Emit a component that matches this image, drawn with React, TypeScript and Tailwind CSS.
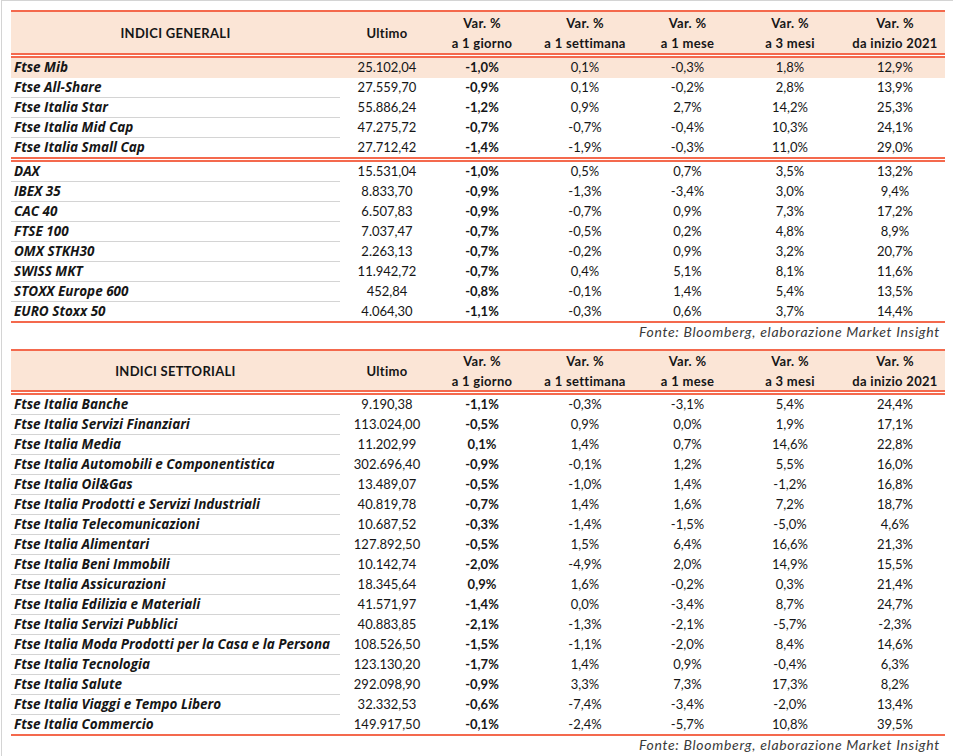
type Row = [string, string, string, string, string, string, string];

const ORANGE = "bg-[#f4694d]";

const GENERALI_IT: Row[] = [
  ["Ftse Mib", "25.102,04", "-1,0%", "0,1%", "-0,3%", "1,8%", "12,9%"],
  ["Ftse All-Share", "27.559,70", "-0,9%", "0,1%", "-0,2%", "2,8%", "13,9%"],
  ["Ftse Italia Star", "55.886,24", "-1,2%", "0,9%", "2,7%", "14,2%", "25,3%"],
  ["Ftse Italia Mid Cap", "47.275,72", "-0,7%", "-0,7%", "-0,4%", "10,3%", "24,1%"],
  ["Ftse Italia Small Cap", "27.712,42", "-1,4%", "-1,9%", "-0,3%", "11,0%", "29,0%"],
];

const GENERALI_EU: Row[] = [
  ["DAX", "15.531,04", "-1,0%", "0,5%", "0,7%", "3,5%", "13,2%"],
  ["IBEX 35", "8.833,70", "-0,9%", "-1,3%", "-3,4%", "3,0%", "9,4%"],
  ["CAC 40", "6.507,83", "-0,9%", "-0,7%", "0,9%", "7,3%", "17,2%"],
  ["FTSE 100", "7.037,47", "-0,7%", "-0,5%", "0,2%", "4,8%", "8,9%"],
  ["OMX STKH30", "2.263,13", "-0,7%", "-0,2%", "0,9%", "3,2%", "20,7%"],
  ["SWISS MKT", "11.942,72", "-0,7%", "0,4%", "5,1%", "8,1%", "11,6%"],
  ["STOXX Europe 600", "452,84", "-0,8%", "-0,1%", "1,4%", "5,4%", "13,5%"],
  ["EURO Stoxx 50", "4.064,30", "-1,1%", "-0,3%", "0,6%", "3,7%", "14,4%"],
];

const SETTORIALI: Row[] = [
  ["Ftse Italia Banche", "9.190,38", "-1,1%", "-0,3%", "-3,1%", "5,4%", "24,4%"],
  ["Ftse Italia Servizi Finanziari", "113.024,00", "-0,5%", "0,9%", "0,0%", "1,9%", "17,1%"],
  ["Ftse Italia Media", "11.202,99", "0,1%", "1,4%", "0,7%", "14,6%", "22,8%"],
  ["Ftse Italia Automobili e Componentistica", "302.696,40", "-0,9%", "-0,1%", "1,2%", "5,5%", "16,0%"],
  ["Ftse Italia Oil&Gas", "13.489,07", "-0,5%", "-1,0%", "1,4%", "-1,2%", "16,8%"],
  ["Ftse Italia Prodotti e Servizi Industriali", "40.819,78", "-0,7%", "1,4%", "1,6%", "7,2%", "18,7%"],
  ["Ftse Italia Telecomunicazioni", "10.687,52", "-0,3%", "-1,4%", "-1,5%", "-5,0%", "4,6%"],
  ["Ftse Italia Alimentari", "127.892,50", "-0,5%", "1,5%", "6,4%", "16,6%", "21,3%"],
  ["Ftse Italia Beni Immobili", "10.142,74", "-2,0%", "-4,9%", "2,0%", "14,9%", "15,5%"],
  ["Ftse Italia Assicurazioni", "18.345,64", "0,9%", "1,6%", "-0,2%", "0,3%", "21,4%"],
  ["Ftse Italia Edilizia e Materiali", "41.571,97", "-1,4%", "0,0%", "-3,4%", "8,7%", "24,7%"],
  ["Ftse Italia Servizi Pubblici", "40.883,85", "-2,1%", "-1,3%", "-2,1%", "-5,7%", "-2,3%"],
  ["Ftse Italia Moda Prodotti per la Casa e la Persona", "108.526,50", "-1,5%", "-1,1%", "-2,0%", "8,4%", "14,6%"],
  ["Ftse Italia Tecnologia", "123.130,20", "-1,7%", "1,4%", "0,9%", "-0,4%", "6,3%"],
  ["Ftse Italia Salute", "292.098,90", "-0,9%", "3,3%", "7,3%", "17,3%", "8,2%"],
  ["Ftse Italia Viaggi e Tempo Libero", "32.332,53", "-0,6%", "-7,4%", "-3,4%", "-2,0%", "13,4%"],
  ["Ftse Italia Commercio", "149.917,50", "-0,1%", "-2,4%", "-5,7%", "10,8%", "39,5%"],
];

// larghezze colonne (totale 934px)
const GRID = "grid grid-cols-[329px_94px_96px_110px_95px_110px_100px]";

function DoubleLine() {
  return (
    <div className="flex flex-col">
      <div className={`h-[2px] ${ORANGE}`} />
      <div className="h-px bg-white" />
      <div className={`h-[2px] ${ORANGE}`} />
    </div>
  );
}

function Header({ title, height }: { title: string; height: string }) {
  const vars = ["a 1 giorno", "a 1 settimana", "a 1 mese", "a 3 mesi", "da inizio 2021"];
  return (
    <div className={`${GRID} ${height} bg-[#fbe5d6] font-bold text-[13px] leading-[20px] tracking-[0.3px]`}>
      <div className="flex items-center justify-center">{title}</div>
      <div className="flex items-center justify-center">Ultimo</div>
      {vars.map((v) => (
        <div key={v} className="flex flex-col items-center justify-center">
          <span>Var. %</span>
          <span>{v}</span>
        </div>
      ))}
    </div>
  );
}

function DataRow({ row, line, highlight }: { row: Row; line: boolean; highlight?: boolean }) {
  return (
    <div className={`${GRID} ${line ? "h-[20px]" : "h-[19px]"} ${highlight ? "bg-[#fbe5d6] h-[20px]" : ""} text-[13px] leading-[19px]`}>
      <div
        className={`pl-[3px] font-bold italic text-[13.5px] whitespace-nowrap ${line ? "border-b border-[#d4d4d4]" : ""}`}
        style={{ fontFamily: "'Open Sans', Lato, sans-serif" }}
      >
        {row[0]}
      </div>
      <div className="text-center">{row[1]}</div>
      <div className="text-center font-bold">{row[2]}</div>
      <div className="text-center">{row[3]}</div>
      <div className="text-center">{row[4]}</div>
      <div className="text-center">{row[5]}</div>
      <div className="text-center">{row[6]}</div>
    </div>
  );
}

function Fonte({ className }: { className: string }) {
  return (
    <div className={`text-right italic text-[14px] leading-[17px] tracking-[0.7px] text-[#3a3a3a] pr-[5px] ${className}`}>
      Fonte: Bloomberg, elaborazione Market Insight
    </div>
  );
}

export default function App() {
  return (
    <div className="w-[953px] h-[756px] bg-white overflow-hidden">
      <div
        className="h-full ml-px border-t border-l border-[#d4d4d4] pl-[9px] pt-[9px] text-[#161616]"
        style={{ fontFamily: "Lato, 'Noto Sans', sans-serif" }}
      >
        <div className="w-[934px]">
          {/* Indici generali */}
          <div className={`h-[2px] ${ORANGE}`} />
          <Header title="INDICI GENERALI" height="h-[41px]" />
          <DoubleLine />
          {GENERALI_IT.map((r, i) => (
            <DataRow key={r[0]} row={r} line={i > 0 && i < GENERALI_IT.length - 1} highlight={i === 0} />
          ))}
          <DoubleLine />
          {GENERALI_EU.map((r, i) => (
            <DataRow key={r[0]} row={r} line={i < GENERALI_EU.length - 1} />
          ))}
          <div className={`h-[2px] ${ORANGE}`} />
          <Fonte className="h-[26px]" />

          {/* Indici settoriali */}
          <div className={`h-[2px] ${ORANGE}`} />
          <Header title="INDICI SETTORIALI" height="h-[39px]" />
          <DoubleLine />
          {SETTORIALI.map((r, i) => (
            <DataRow key={r[0]} row={r} line={i < SETTORIALI.length - 1} />
          ))}
          <div className={`h-[2px] ${ORANGE}`} />
          <Fonte className="" />
        </div>
      </div>
    </div>
  );
}
